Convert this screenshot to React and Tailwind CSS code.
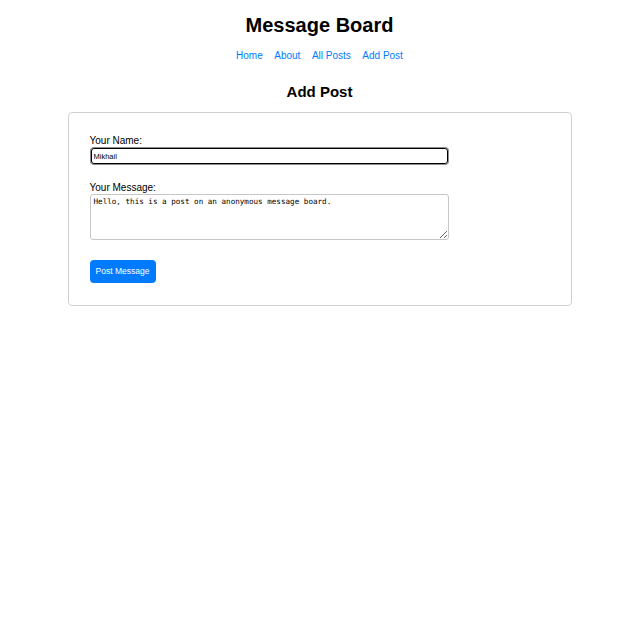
import React, { useState } from "react";

const navLinks = ["Home", "About", "All Posts", "Add Post"];

const App = () => {
  const [name, setName] = useState("Mikhail");
  const [message, setMessage] = useState(
    "Hello, this is a post on an anonymous message board."
  );

  return (
    <div className="min-h-screen bg-white text-black font-['Liberation_Sans',Arial,sans-serif]">
      {/* Header */}
      <header className="flex flex-col items-center pt-[15px]">
        <h1 className="text-[20px] leading-[20px] font-bold">Message Board</h1>
        <nav className="mt-[16px] flex gap-[11.5px] text-[10px] leading-[10px]">
          {navLinks.map((link) => (
            <a key={link} href="#" className="text-[#007bff]">
              {link}
            </a>
          ))}
        </nav>
      </header>

      <main className="flex flex-col items-center">
        <h2 className="mt-[23px] text-[15px] leading-[15px] font-bold">Add Post</h2>

        {/* Form card */}
        <form
          onSubmit={(e) => e.preventDefault()}
          className="mt-[13px] w-[504px] rounded-[4px] border border-[#cfcfcf] px-[21px] pt-[22px] pb-[22px] flex flex-col items-start"
        >
          <label className="text-[10px] leading-[12px]">Your Name:</label>
          <input
            value={name}
            onChange={(e) => setName(e.target.value)}
            className="my-[1px] h-[16px] w-[357px] ml-[1px] rounded-[3px] border border-black px-[2px] text-[7.5px] outline-none shadow-[0_0_0_1px_#8c8c8c]"
          />

          <label className="mt-[17px] text-[10px] leading-[12px]">Your Message:</label>
          <textarea
            value={message}
            onChange={(e) => setMessage(e.target.value)}
            className="h-[46px] w-[359px] rounded-[3px] border border-[#c6c6c6] px-[3px] py-[2px] text-[7.6px] leading-[10px] font-['DejaVu_Sans_Mono',monospace] outline-none"
          />

          <button
            type="submit"
            className="mt-[20px] h-[23px] w-[66px] rounded-[4px] bg-[#007bff] text-[8.5px] text-white flex items-center justify-center"
          >
            Post Message
          </button>
        </form>
      </main>
    </div>
  );
};

export default App;
